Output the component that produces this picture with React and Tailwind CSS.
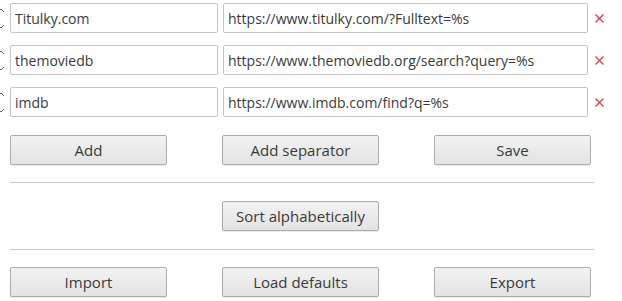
import React from 'react';

const rows = [
  { name: 'Titulky.com', url: 'https://www.titulky.com/?Fulltext=%s' },
  { name: 'themoviedb', url: 'https://www.themoviedb.org/search?query=%s' },
  { name: 'imdb', url: 'https://www.imdb.com/find?q=%s' },
];

function Handle() {
  return (
    <div className="w-[9px] h-[30px] overflow-hidden shrink-0 relative">
      <svg width="9" height="30" viewBox="0 0 9 30" className="absolute left-[-4px] top-0">
        <path d="M2 9 L5 6 L8 9" fill="none" stroke="#666" strokeWidth="1" />
        <path d="M2 22 L5 25 L8 22" fill="none" stroke="#666" strokeWidth="1" />
      </svg>
    </div>
  );
}

function Btn({ children }) {
  return (
    <button className="w-[157px] h-[30px] rounded-[2px] border border-[#acacac] bg-gradient-to-b from-[#f2f2f2] to-[#e3e3e3] text-[15px] text-[#3a3a3a] shadow-[0_1px_1px_rgba(0,0,0,0.08)]">
      {children}
    </button>
  );
}

export default function App() {
  return (
    <div className="w-[622px] h-[301px] bg-white font-['Open_Sans',sans-serif] text-[#3a3a3a] overflow-hidden">
      {/* Engine rows */}
      <div className="flex flex-col gap-[12px] pt-[3px]">
        {rows.map(r => (
          <div key={r.name} className="flex items-center h-[30px]">
            <Handle />
            <input
              readOnly
              value={r.name}
              className="w-[208px] h-[30px] ml-[1px] border border-[#c4c4c4] rounded-[2px] px-[4px] text-[14px] text-[#3a3a3a] outline-none"
            />
            <input
              readOnly
              value={r.url}
              className="w-[365px] h-[30px] ml-[5px] border border-[#c4c4c4] rounded-[2px] px-[4px] text-[14px] text-[#3a3a3a] outline-none"
            />
            <svg width="9" height="9" viewBox="0 0 9 9" className="ml-[7px]">
              <path d="M0.5 0.5 L8.5 8.5 M8.5 0.5 L0.5 8.5" stroke="#e23b3b" strokeWidth="1.3" />
            </svg>
          </div>
        ))}
      </div>

      {/* Actions */}
      <div className="flex gap-[55px] pl-[10px] mt-[18px]">
        <Btn>Add</Btn>
        <Btn>Add separator</Btn>
        <Btn>Save</Btn>
      </div>

      <div className="ml-[10px] w-[584px] h-px bg-[#c8c8c8] mt-[17px]" />

      <div className="flex pl-[222px] mt-[18px]">
        <Btn>Sort alphabetically</Btn>
      </div>

      <div className="ml-[10px] w-[584px] h-px bg-[#c8c8c8] mt-[18px]" />

      <div className="flex gap-[55px] pl-[10px] mt-[17px]">
        <Btn>Import</Btn>
        <Btn>Load defaults</Btn>
        <Btn>Export</Btn>
      </div>
    </div>
  );
}
